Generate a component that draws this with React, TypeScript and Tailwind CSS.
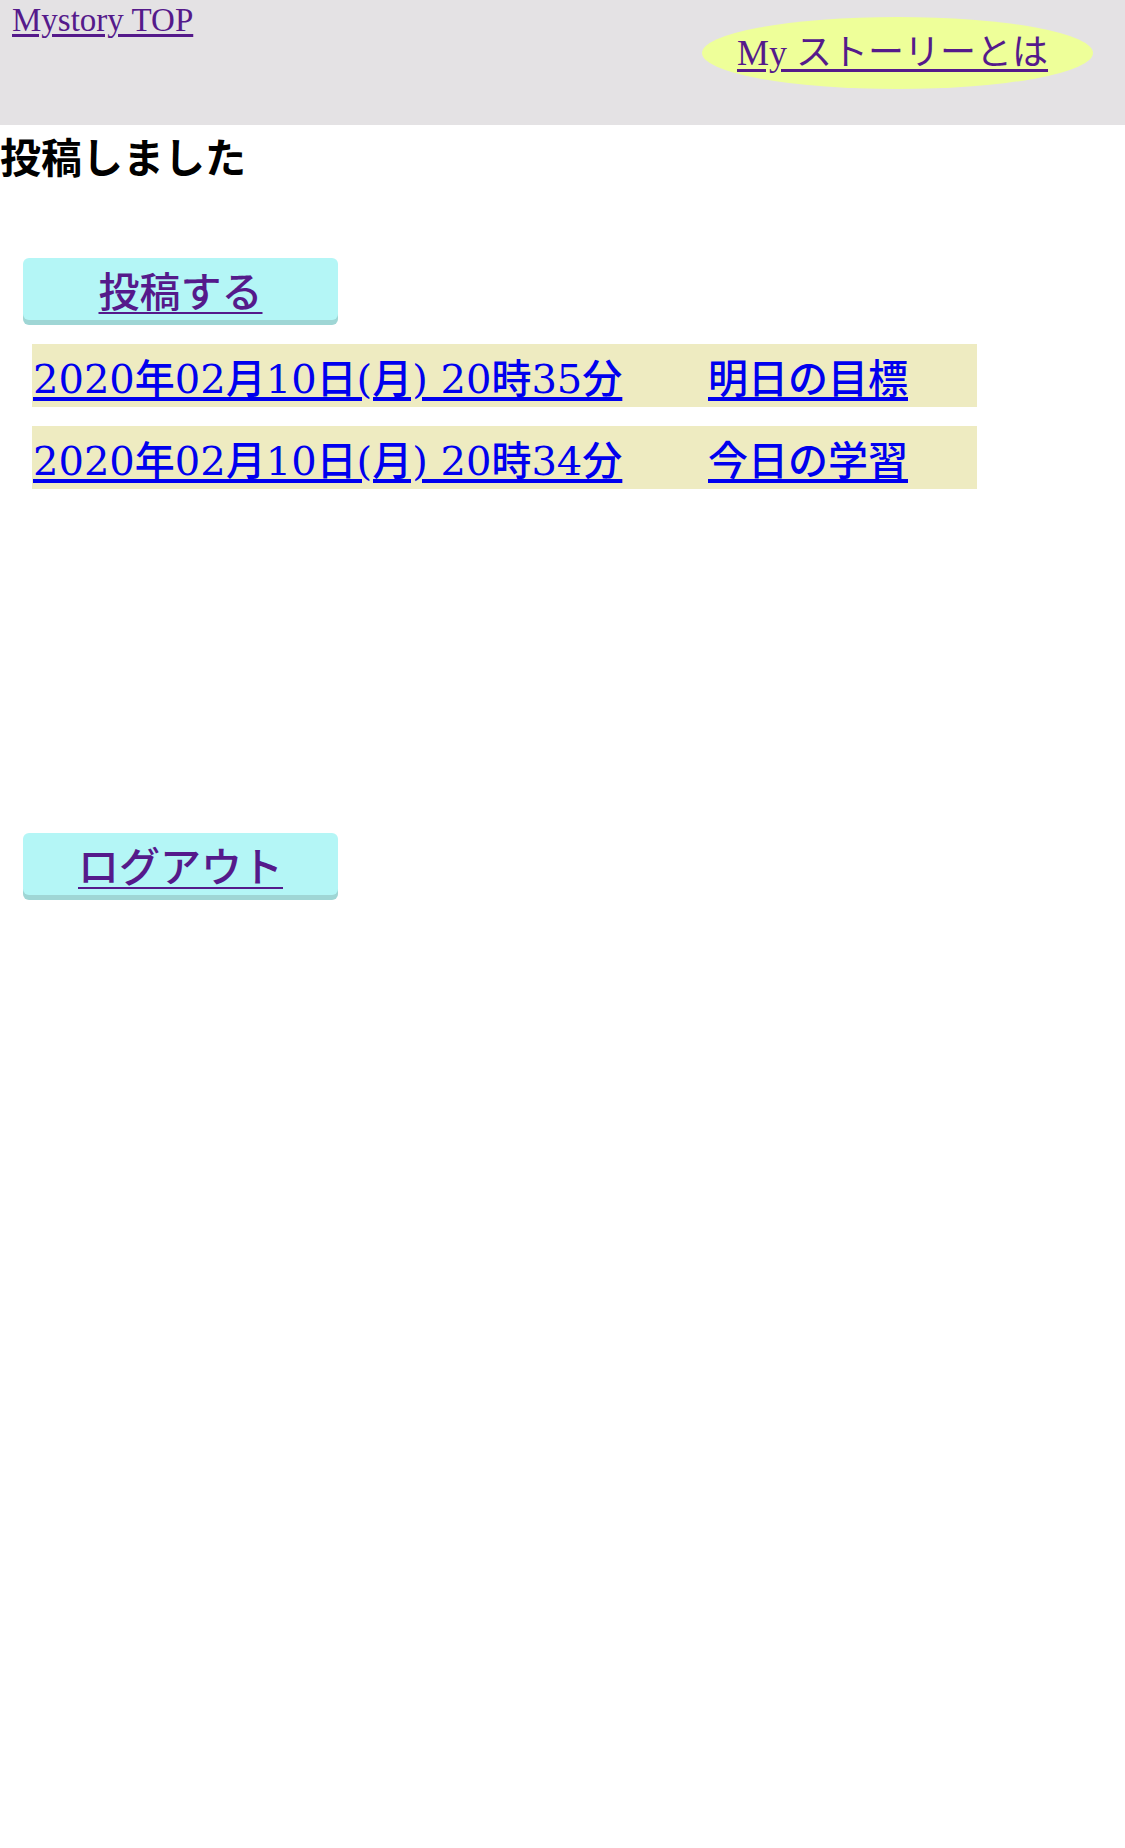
import React from 'react';

interface Post {
    id: number;
    postedAt: string;
    title: string;
}

const posts: Post[] = [
    {id: 2, postedAt: '2020年02月10日(月) 20時35分', title: '明日の目標'},
    {id: 1, postedAt: '2020年02月10日(月) 20時34分', title: '今日の学習'},
];

const serif = 'font-["Liberation_Serif","Noto_Sans_CJK_JP",serif]';

function PillButton({label}: { label: string }) {
    return (
        <div
            className="ml-[23px] w-[315px] h-[62px] rounded-[6px] bg-[#b4f6f6] shadow-[0_5px_0_#9fd6d5] text-center">
            <a href="#"
               className='font-["Noto_Sans_CJK_JP",sans-serif] font-medium text-[41px] leading-[62px] text-[#551a8b] underline underline-offset-[5px] decoration-2'>
                {label}
            </a>
        </div>
    );
}

function App() {
    return (
        <div className="w-[1125px] min-h-[1848px] bg-white">
            <header className="h-[125px] bg-[#e4e2e4] flex justify-between items-start pl-[12px] pr-[32px]">
                <a href="#"
                   className={`${serif} text-[33px] leading-[33px] pt-[4px] text-[#551a8b] underline underline-offset-[3px]`}>
                    Mystory TOP
                </a>
                <div className="mt-[17px] w-[391px] h-[72px] rounded-[50%] bg-[#eeff99]">
                    <a href="#"
                       className={`${serif} block pl-[35px] text-[36px] leading-[72px] text-[#551a8b] underline underline-offset-[4px]`}>
                        My ストーリーとは
                    </a>
                </div>
            </header>

            <h1 className='mt-[10px] font-["Noto_Sans_CJK_JP",sans-serif] font-bold text-[41px] leading-[40px] text-black'>
                投稿しました
            </h1>

            <div className="mt-[83px]">
                <PillButton label="投稿する"/>
            </div>

            <div className="mt-[24px] ml-[32px] w-[945px] flex flex-col gap-[19px]">
                {posts.map((post) => (
                    <div key={post.id}
                         className='h-[63px] bg-[#eeebc1] grid grid-cols-[675px_1fr] pl-[1px] pt-[7px] font-["DejaVu_Serif","Noto_Sans_CJK_JP",serif] font-medium text-[40px] leading-[56px]'>
                        <a href="#" className="text-[#0000ee] underline underline-offset-[4px] whitespace-nowrap">
                            {post.postedAt}
                        </a>
                        <a href="#" className="text-[#0000ee] underline underline-offset-[4px] whitespace-nowrap">
                            {post.title}
                        </a>
                    </div>
                ))}
            </div>

            <div className="mt-[344px]">
                <PillButton label="ログアウト"/>
            </div>
        </div>
    );
}

export default App;
